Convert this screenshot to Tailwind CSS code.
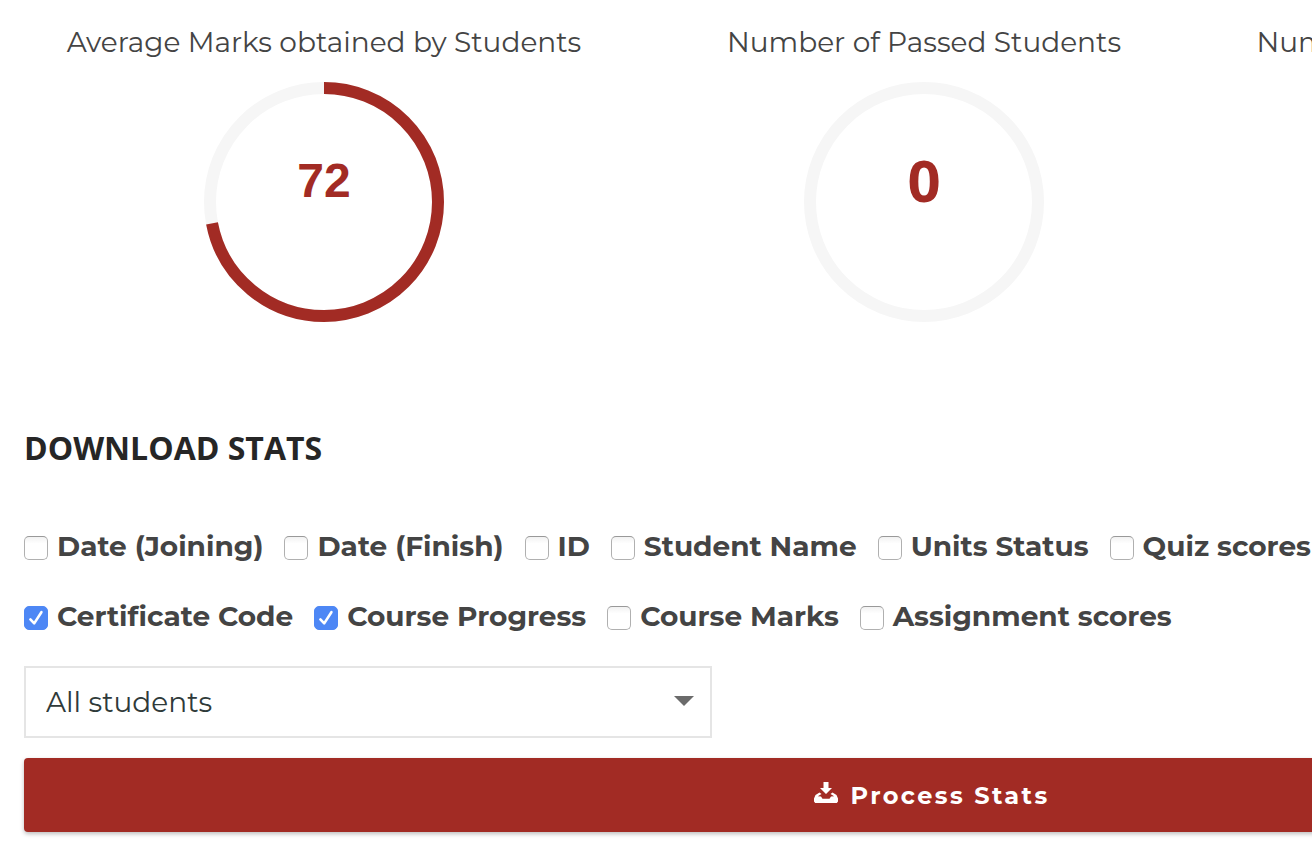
<!DOCTYPE html>
<html lang="en">
<head>
<meta charset="utf-8">
<meta name="viewport" content="width=device-width, initial-scale=1">
<title>Course Stats</title>
<script src="https://cdn.jsdelivr.net/npm/@tailwindcss/browser@4"></script>
</head>
<body class="overflow-x-hidden bg-white font-['Montserrat','Inter',sans-serif] text-[#444]">
<main class="overflow-hidden pt-6 pb-4 pl-6">
  <section class="grid grid-cols-[600px_600px_600px]" aria-label="Course statistics">
    <article class="flex flex-col items-center gap-[22px]">
      <h2 class="text-[28px] leading-9 whitespace-nowrap">Average Marks obtained by Students</h2>
      <div class="grid size-60 place-items-center">
        <svg class="col-start-1 row-start-1 size-60" viewBox="0 0 240 240" fill="none" stroke-width="12" aria-hidden="true">
          <circle cx="120" cy="120" r="114" stroke="#f6f6f6"/>
          <circle cx="120" cy="120" r="114" stroke="#a22b24" pathLength="100" stroke-dasharray="72 28" transform="rotate(-90 120 120)"/>
        </svg>
        <strong class="col-start-1 row-start-1 pb-[42px] font-['Liberation_Sans',sans-serif] text-5xl leading-none font-bold text-[#a22b24]">72</strong>
      </div>
    </article>
    <article class="flex flex-col items-center gap-[22px]">
      <h2 class="text-[28px] leading-9 whitespace-nowrap">Number of Passed Students</h2>
      <div class="grid size-60 place-items-center">
        <svg class="col-start-1 row-start-1 size-60" viewBox="0 0 240 240" fill="none" stroke-width="12" aria-hidden="true">
          <circle cx="120" cy="120" r="114" stroke="#f6f6f6"/>
        </svg>
        <strong class="col-start-1 row-start-1 pb-11 font-['Open_Sans',sans-serif] text-[58px] leading-none font-bold text-[#a22b24]">0</strong>
      </div>
    </article>
    <article class="flex flex-col items-center">
      <h2 class="text-[28px] leading-9 whitespace-nowrap">Number of Students who got a Badge</h2>
    </article>
  </section>

  <form class="mt-[102px]">
    <h3 class="font-['Open_Sans',sans-serif] text-[32px] leading-[48px] font-bold text-[#262626]">DOWNLOAD STATS</h3>
    <fieldset aria-label="Fields to include" class="mt-[54px] flex flex-col gap-[30px] text-[28px] leading-10 font-bold whitespace-nowrap [font-variant-ligatures:none]">
      <div class="flex gap-[21px]">
        <label class="flex items-center gap-[9px]"><input type="checkbox" class="mt-[3px] size-6 appearance-none rounded-[5px] border border-[#b0b0b0] border-t-[#999] bg-white bg-linear-to-b from-[#f2f2f2] to-white to-30%">Date (Joining)</label>
        <label class="flex items-center gap-[9px]"><input type="checkbox" class="mt-[3px] size-6 appearance-none rounded-[5px] border border-[#b0b0b0] border-t-[#999] bg-white bg-linear-to-b from-[#f2f2f2] to-white to-30%">Date (Finish)</label>
        <label class="flex items-center gap-[9px]"><input type="checkbox" class="mt-[3px] size-6 appearance-none rounded-[5px] border border-[#b0b0b0] border-t-[#999] bg-white bg-linear-to-b from-[#f2f2f2] to-white to-30%">ID</label>
        <label class="flex items-center gap-[9px]"><input type="checkbox" class="mt-[3px] size-6 appearance-none rounded-[5px] border border-[#b0b0b0] border-t-[#999] bg-white bg-linear-to-b from-[#f2f2f2] to-white to-30%">Student Name</label>
        <label class="flex items-center gap-[9px]"><input type="checkbox" class="mt-[3px] size-6 appearance-none rounded-[5px] border border-[#b0b0b0] border-t-[#999] bg-white bg-linear-to-b from-[#f2f2f2] to-white to-30%">Units Status</label>
        <label class="flex items-center gap-[9px]"><input type="checkbox" class="mt-[3px] size-6 appearance-none rounded-[5px] border border-[#b0b0b0] border-t-[#999] bg-white bg-linear-to-b from-[#f2f2f2] to-white to-30%">Quiz scores</label>
      </div>
      <div class="flex gap-[21px]">
        <label class="flex items-center gap-[9px]"><span class="mt-[3px] grid size-6"><input type="checkbox" checked class="peer col-start-1 row-start-1 size-6 appearance-none rounded-[5px] border border-[#b0b0b0] bg-white checked:border-[#4d87f5] checked:bg-[#4d87f5]"><svg class="pointer-events-none invisible col-start-1 row-start-1 size-6 peer-checked:visible" viewBox="0 0 24 24" fill="none" stroke="#fff" stroke-width="2.6" stroke-linecap="round" stroke-linejoin="round" aria-hidden="true"><path d="M6.400 13.400 10.200 17.400 17.400 6.200"/></svg></span>Certificate Code</label>
        <label class="flex items-center gap-[9px]"><span class="mt-[3px] grid size-6"><input type="checkbox" checked class="peer col-start-1 row-start-1 size-6 appearance-none rounded-[5px] border border-[#b0b0b0] bg-white checked:border-[#4d87f5] checked:bg-[#4d87f5]"><svg class="pointer-events-none invisible col-start-1 row-start-1 size-6 peer-checked:visible" viewBox="0 0 24 24" fill="none" stroke="#fff" stroke-width="2.6" stroke-linecap="round" stroke-linejoin="round" aria-hidden="true"><path d="M6.400 13.400 10.200 17.400 17.400 6.200"/></svg></span>Course Progress</label>
        <label class="flex items-center gap-[9px]"><input type="checkbox" class="mt-[3px] size-6 appearance-none rounded-[5px] border border-[#b0b0b0] border-t-[#999] bg-white bg-linear-to-b from-[#f2f2f2] to-white to-30%">Course Marks</label>
        <label class="flex items-center gap-[9px]"><input type="checkbox" class="mt-[3px] size-6 appearance-none rounded-[5px] border border-[#b0b0b0] border-t-[#999] bg-white bg-linear-to-b from-[#f2f2f2] to-white to-30%">Assignment scores</label>
      </div>
    </fieldset>
    <div class="mt-[30px] grid w-[688px] items-center">
      <select aria-label="Students" class="col-start-1 row-start-1 h-18 w-full appearance-none border-2 border-[#e5e5e5] bg-white px-5 text-[28px] text-[#2f3a3a]"><option>All students</option></select>
      <svg class="pointer-events-none col-start-1 row-start-1 mr-[18px] mb-0.5 h-[10px] w-5 justify-self-end" viewBox="0 0 20 10" fill="#6b6b6b" aria-hidden="true"><path d="M0 0H20L10 10Z"/></svg>
    </div>
    <button type="button" class="mt-5 flex h-[74px] w-[1816px] items-center justify-center gap-3 rounded-[4px] bg-[#a22b24] pt-0.5 text-2xl font-bold tracking-widest text-white shadow-[0_2px_4px_rgba(0,0,0,0.26)]">
      <svg class="mb-2 h-[21px] w-6" viewBox="0 0 24 21" fill="#fff" aria-hidden="true"><path d="M9.500 0h5v6H18l-6 6-6-6h3.500Z"/><path d="M5.500 10.500 7.500 12 3.800 14.200 7 14.500 8.500 16.700h7L17 14.500l3.200-.3L16.500 12l2-1.500L22.500 13 24 16.500v3L22.800 21H1.200L0 19.500v-3L1.500 13Z"/></svg>
      Process Stats
    </button>
  </form>
</main>
</body>
</html>
